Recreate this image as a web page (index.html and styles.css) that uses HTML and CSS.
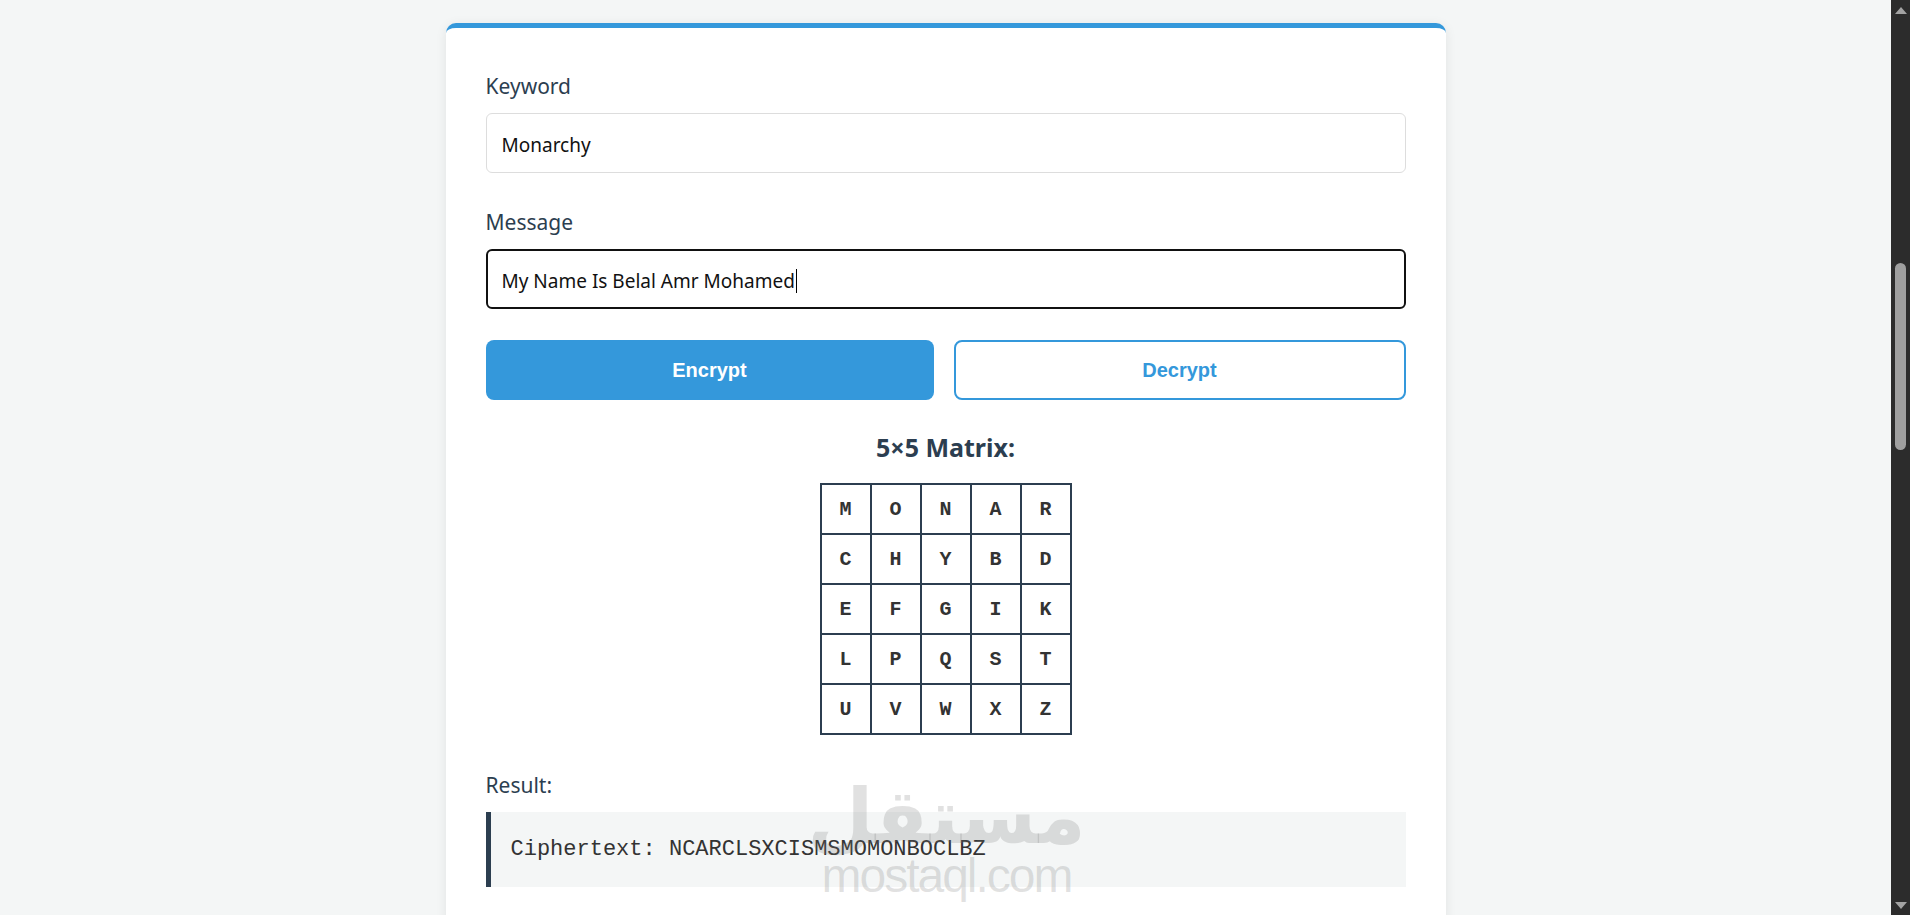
FILE: index.html
```html
<!DOCTYPE html>
<html lang="en">
<head>
<meta charset="utf-8">
<title>Playfair Cipher</title>
<link rel="stylesheet" href="styles.css">
</head>
<body>
  <div class="viewport">
    <main class="card">
      <div class="group">
        <label class="label">Keyword</label>
        <div class="field">Monarchy</div>
      </div>

      <div class="group">
        <label class="label">Message</label>
        <div class="field field--focus">My Name Is Belal Amr Mohamed<span class="caret"></span></div>
      </div>

      <div class="actions">
        <button class="btn btn--primary" type="button">Encrypt</button>
        <button class="btn btn--outline" type="button">Decrypt</button>
      </div>

      <section class="matrix">
        <h3 class="matrix__title">5×5 Matrix:</h3>
        <div class="matrix__grid">
          <div class="cell">M</div><div class="cell">O</div><div class="cell">N</div><div class="cell">A</div><div class="cell">R</div>
          <div class="cell">C</div><div class="cell">H</div><div class="cell">Y</div><div class="cell">B</div><div class="cell">D</div>
          <div class="cell">E</div><div class="cell">F</div><div class="cell">G</div><div class="cell">I</div><div class="cell">K</div>
          <div class="cell">L</div><div class="cell">P</div><div class="cell">Q</div><div class="cell">S</div><div class="cell">T</div>
          <div class="cell">U</div><div class="cell">V</div><div class="cell">W</div><div class="cell">X</div><div class="cell">Z</div>
        </div>
      </section>

      <section class="result">
        <div class="label">Result:</div>
        <div class="result__box">Ciphertext: NCARCLSXCISMSMOMONBOCLBZ</div>
        <div class="watermark" aria-hidden="true">
          <span class="watermark__ar">مستقل</span>
          <span class="watermark__en">mostaql.com</span>
        </div>
      </section>
    </main>
  </div>

  <div class="scrollbar" aria-hidden="true">
    <span class="scrollbar__arrow scrollbar__arrow--up"></span>
    <div class="scrollbar__track">
      <span class="scrollbar__thumb"></span>
    </div>
    <span class="scrollbar__arrow scrollbar__arrow--down"></span>
  </div>
</body>
</html>
```

FILE: styles.css
```css
html, body {
  margin: 0;
  height: 100%;
}

body {
  display: flex;
  overflow: hidden;
  background: #f4f6f6;
  font-family: "Segoe UI", "Noto Sans", sans-serif;
  color: #2c3e50;
}

/* page area left of the scrollbar */
.viewport {
  flex: 1;
  min-width: 0;
  padding-top: 23px;
}

.card {
  box-sizing: border-box;
  width: 1000px;
  margin: 0 auto;
  padding: 40px;
  background: #fff;
  border-top: 5px solid #3498db;
  border-radius: 10px;
  box-shadow: 0 2px 12px rgba(0, 0, 0, 0.08);
}

/* form */
.group {
  margin-bottom: 31px;
}

.label {
  display: block;
  padding-top: 1px;
  font-size: 21px;
  line-height: 35px;
  margin-bottom: 9px;
  color: #2c3e50;
}

.field {
  box-sizing: border-box;
  height: 60px;
  display: flex;
  align-items: center;
  padding: 3px 15px 0;
  border: 1px solid #ddd;
  border-radius: 6px;
  font-size: 19px;
  color: #111;
  white-space: pre;
}

.field--focus {
  border: 2px solid #111;
  padding: 3px 14px 0;
}

.caret {
  width: 1px;
  height: 24px;
  margin-left: 1px;
  background: #000;
}

.actions {
  display: flex;
  gap: 20px;
  margin-bottom: 30px;
}

.btn {
  box-sizing: content-box;
  flex: 1 1 0;
  height: 60px;
  padding: 0;
  border-radius: 8px;
  font: bold 20px "Liberation Sans", Arial, sans-serif;
  cursor: pointer;
}

.btn--primary {
  border: none;
  background: #3498db;
  color: #fff;
}

.btn--outline {
  height: 56px;
  border: 2px solid #3498db;
  background: #fff;
  color: #3498db;
}

/* key square */
.matrix {
  display: flex;
  flex-direction: column;
  align-items: center;
  margin-bottom: 32px;
}

.matrix__title {
  margin: 0 0 19px;
  font-size: 25px;
  line-height: 34px;
  font-weight: 700;
  color: #2c3e50;
}

.matrix__grid {
  display: grid;
  grid-template-columns: repeat(5, 48px);
  grid-auto-rows: 48px;
  gap: 2px;
  padding: 2px;
  background: #2c3e50;
}

.cell {
  display: flex;
  align-items: center;
  justify-content: center;
  background: #fff;
  font: bold 20px "Courier New", "Liberation Mono", monospace;
  color: #333;
}

/* output */
.result {
  position: relative;
}

.result__box {
  padding: 20px;
  background: #f4f6f6;
  border-left: 5px solid #2c3e50;
  font: 22px/1.6 "Courier New", "Liberation Mono", monospace;
  color: #333;
}

.watermark {
  position: absolute;
  left: 336px;
  top: 12px;
  width: 250px;
  display: flex;
  flex-direction: column;
  align-items: center;
  color: rgba(120, 120, 120, 0.22);
  pointer-events: none;
}

.watermark__ar {
  font: bold 76px/76px "DejaVu Sans", sans-serif;
}

.watermark__en {
  font: 48px/42px "Liberation Sans", Arial, sans-serif;
  letter-spacing: -2px;
}

/* window scrollbar */
.scrollbar {
  width: 19px;
  flex: none;
  display: flex;
  flex-direction: column;
  align-items: center;
  background: #2c2c2c;
}

.scrollbar__arrow {
  width: 0;
  height: 0;
  border-left: 6px solid transparent;
  border-right: 6px solid transparent;
}

.scrollbar__arrow--up {
  margin-top: 7px;
  border-bottom: 7px solid #a3a3a3;
}

.scrollbar__arrow--down {
  margin-bottom: 6px;
  border-top: 7px solid #a3a3a3;
}

.scrollbar__track {
  flex: 1;
  align-self: stretch;
  display: flex;
  justify-content: center;
}

.scrollbar__thumb {
  width: 11px;
  height: 187px;
  margin-top: 249px;
  border-radius: 6px;
  background: #9f9f9f;
}
```
